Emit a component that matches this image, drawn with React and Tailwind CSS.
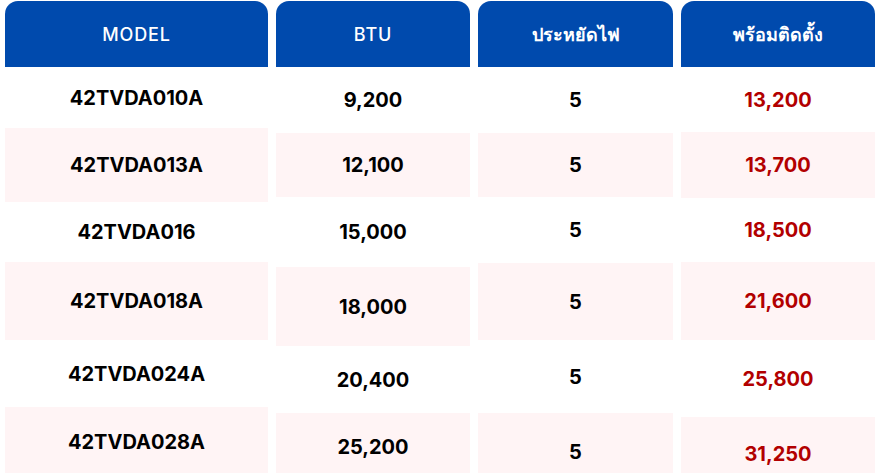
import React from 'react';

// each column stacks on its own, so row heights differ per column
const columns = [
  {
    title: 'MODEL',
    width: 'w-[263px]',
    cells: [
      { text: '42TVDA010A', h: 'h-[61px]' },
      { text: '42TVDA013A', h: 'h-[74px]' },
      { text: '42TVDA016', h: 'h-[60px]' },
      { text: '42TVDA018A', h: 'h-[78px]' },
      { text: '42TVDA024A', h: 'h-[67px]' },
      { text: '42TVDA028A', h: 'h-[70px]' },
    ],
  },
  {
    title: 'BTU',
    width: 'w-[194px]',
    cells: [
      { text: '9,200', h: 'h-[66px]' },
      { text: '12,100', h: 'h-[64px]' },
      { text: '15,000', h: 'h-[70px]' },
      { text: '18,000', h: 'h-[79px]' },
      { text: '20,400', h: 'h-[67px]' },
      { text: '25,200', h: 'h-[68px]' },
    ],
  },
  {
    title: 'ประหยัดไฟ',
    thai: true,
    width: 'w-[195px]',
    cells: [
      { text: '5', h: 'h-[66px]' },
      { text: '5', h: 'h-[64px]' },
      { text: '5', h: 'h-[66px]' },
      { text: '5', h: 'h-[77px]' },
      { text: '5', h: 'h-[73px]' },
      { text: '5', h: 'h-[78px]' },
    ],
  },
  {
    title: 'พร้อมติดตั้ง',
    thai: true,
    width: 'w-[194px]',
    red: true,
    cells: [
      { text: '13,200', h: 'h-[65px]' },
      { text: '13,700', h: 'h-[66px]' },
      { text: '18,500', h: 'h-[64px]' },
      { text: '21,600', h: 'h-[78px]' },
      { text: '25,800', h: 'h-[77px]' },
      { text: '31,250', h: 'h-[74px]' },
    ],
  },
];

function PriceColumn({ column }) {
  return (
    <div className={`flex flex-col shrink-0 ${column.width}`}>
      <div
        className={`h-[66px] shrink-0 flex items-center justify-center rounded-t-[13px] bg-[#004aad] text-white text-[18px] ${
          column.thai ? 'font-semibold' : 'font-medium tracking-[0.05em]'
        }`}
      >
        {column.title}
      </div>
      {column.cells.map((cell, index) => (
        <div
          key={index}
          className={`${cell.h} shrink-0 flex items-center justify-center text-[20px] font-bold ${
            index % 2 === 1 ? 'bg-[#fff4f5]' : 'bg-white'
          } ${column.red ? 'text-[#b20000]' : 'text-black'}`}
        >
          {cell.text}
        </div>
      ))}
    </div>
  );
}

export default function App() {
  return (
    <div
      className="w-[880px] h-[473px] overflow-hidden bg-white flex items-start gap-2 px-[5px] pt-px"
      style={{ fontFamily: '"Inter", "Noto Sans", "Noto Sans CJK SC", sans-serif' }}
    >
      {columns.map((column, index) => (
        <PriceColumn key={index} column={column} />
      ))}
    </div>
  );
}
